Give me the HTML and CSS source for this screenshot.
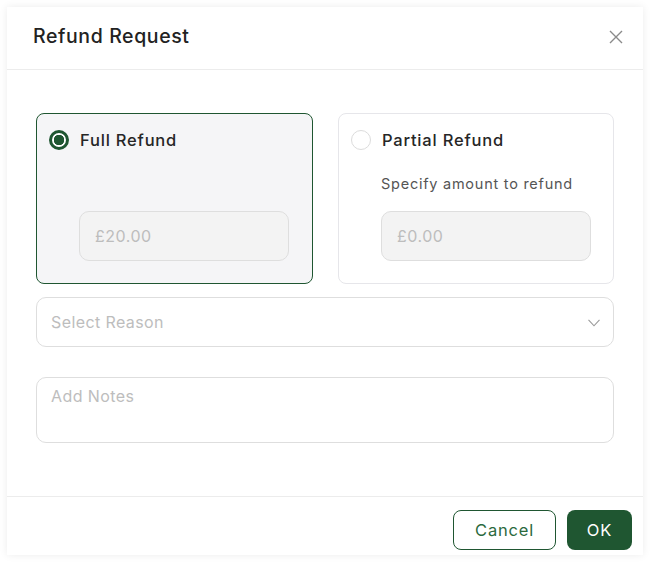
FILE: index.html
```html
<!DOCTYPE html>
<html>
<head>
<meta charset="utf-8">
<link rel="stylesheet" href="styles.css">
</head>
<body>
<div class="modal">
  <div class="header">
    <h1 class="title">Refund Request</h1>
    <svg class="close" width="14" height="14" viewBox="0 0 14 14"><path d="M1 1 L13 13 M13 1 L1 13" stroke="#8a8a8a" stroke-width="1.4" fill="none"/></svg>
  </div>
  <div class="body">
    <div class="options">
      <div class="card selected">
        <div class="opt-head">
          <span class="radio on"></span>
          <span class="opt-label">Full Refund</span>
        </div>
        <div class="opt-content">
          <div class="amount">£20.00</div>
        </div>
      </div>
      <div class="card">
        <div class="opt-head">
          <span class="radio"></span>
          <span class="opt-label">Partial Refund</span>
        </div>
        <div class="opt-content">
          <div class="hint">Specify amount to refund</div>
          <div class="amount">£0.00</div>
        </div>
      </div>
    </div>
    <div class="select">
      <span class="placeholder">Select Reason</span>
      <svg class="chev" width="12" height="8" viewBox="0 0 12 8"><path d="M0.5 0.8 L6 6.8 L11.5 0.8" stroke="#9a9a9a" stroke-width="1.1" fill="none"/></svg>
    </div>
    <div class="notes"><span class="placeholder">Add Notes</span></div>
  </div>
  <div class="footer">
    <button class="btn cancel">Cancel</button>
    <button class="btn ok">OK</button>
  </div>
</div>
</body>
</html>
```
FILE: styles.css
```css
* { box-sizing: border-box; }
html, body { margin: 0; background: #fff; }
body {
  padding: 7px 8px 8px 7px;
  font-family: Inter, "Open Sans", sans-serif;
  color: #222;
}
.modal {
  width: 636px;
  height: 548px;
  background: #fff;
  box-shadow: 0 0 8px rgba(0,0,0,0.08);
  display: flex;
  flex-direction: column;
}
.header {
  height: 63px;
  border-bottom: 1px solid #ececec;
  display: flex;
  align-items: center;
  justify-content: space-between;
  padding: 0 20px 5px 26px;
}
.title {
  margin: 0;
  font-size: 19.5px;
  font-weight: 500;
  color: #222;
  letter-spacing: 0.6px;
}
.close { margin-top: 2px; }
.body {
  padding: 43px 29px 0 29px;
  flex: 1;
}
.options {
  display: grid;
  grid-template-columns: 277px 276px;
  gap: 25px;
}
.card {
  height: 171px;
  border: 1px solid #e6e6ea;
  border-radius: 8px;
  padding: 15px 12px 0 12px;
  background: #fff;
}
.card.selected {
  background: #f5f5f7;
  border-color: #1f5631;
}
.opt-head {
  display: flex;
  align-items: center;
  gap: 11px;
  height: 22px;
}
.radio {
  width: 20px;
  height: 20px;
  border-radius: 50%;
  border: 1px solid #dcdcdc;
  background: #fff;
  flex: none;
}
.radio.on {
  border: 3px solid #1f5631;
  background: radial-gradient(circle, #1f5631 0 5px, #fff 5.5px);
}
.opt-label {
  font-size: 16.5px;
  font-weight: 500;
  color: #262626;
  letter-spacing: 0.8px;
}
.opt-content {
  padding-left: 30px;
  padding-top: 60px;
}
.card:not(.selected) .opt-content { padding-top: 24px; }
.hint {
  font-size: 14.5px;
  color: #555;
  height: 20px;
  margin-bottom: 16px;
  letter-spacing: 0.75px;
}
.amount {
  width: 210px;
  height: 50px;
  border: 1px solid #dedede;
  border-radius: 10px;
  background: #f3f3f3;
  color: #bdbdbd;
  font-size: 16px;
  display: flex;
  align-items: center;
  padding-left: 15px;
  letter-spacing: 0.5px;
}
.select {
  margin-top: 13px;
  height: 50px;
  border: 1px solid #dedede;
  border-radius: 10px;
  display: flex;
  align-items: center;
  justify-content: space-between;
  padding: 0 13px 1px 14px;
}
.chev { margin-top: 3px; }
.placeholder {
  font-size: 16px;
  color: #bdbdbd;
  letter-spacing: 0.4px;
}
.notes {
  margin-top: 30px;
  height: 66px;
  border: 1px solid #dedede;
  border-radius: 10px;
  padding: 8px 14px;
}
.footer {
  height: 59px;
  border-top: 1px solid #ececec;
  display: flex;
  justify-content: flex-end;
  align-items: flex-start;
  gap: 11px;
  padding: 13px 11px 0 0;
}
.btn {
  height: 40px;
  border-radius: 8px;
  font-family: inherit;
  font-size: 16.5px;
  font-weight: 400;
  letter-spacing: 0.8px;
  cursor: pointer;
}
.cancel {
  width: 103px;
  border: 1px solid #1f5631;
  background: #fff;
  color: #2b6a3d;
}
.ok {
  width: 65px;
  border: none;
  background: #1f5631;
  color: #fff;
}
```
